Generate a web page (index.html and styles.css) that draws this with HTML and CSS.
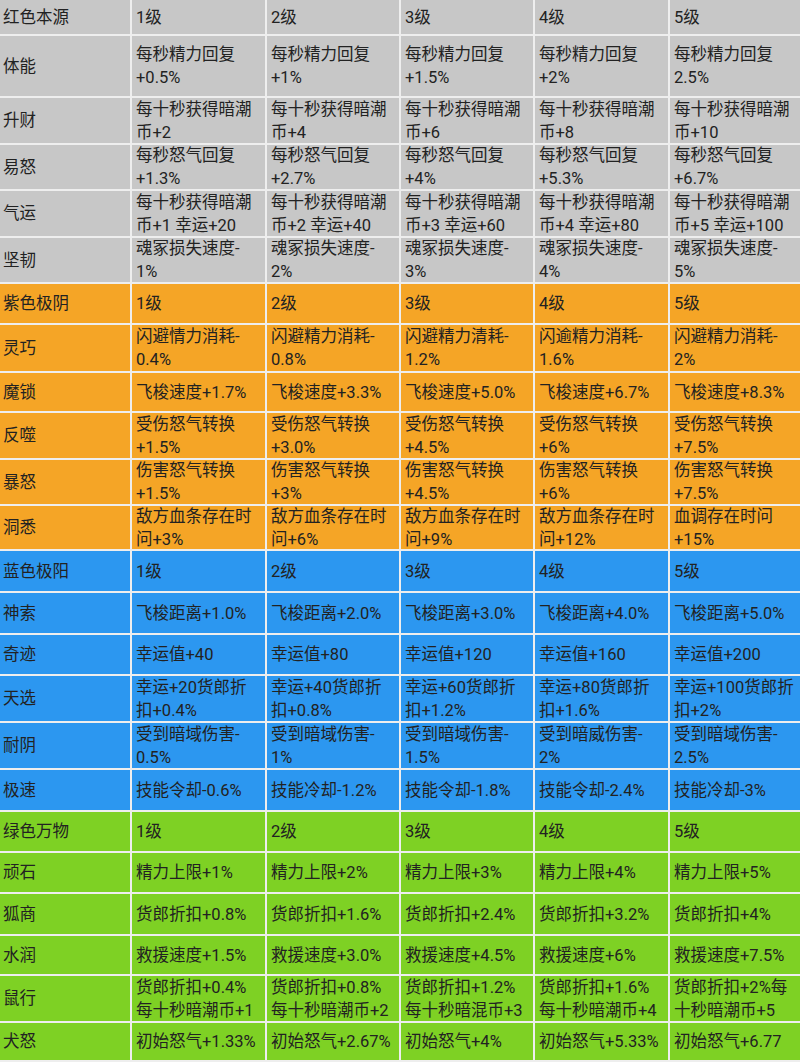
FILE: index.html
```html
<!DOCTYPE html>
<html lang="zh-CN">
<head>
<meta charset="utf-8">
<title>天赋表</title>
<link rel="stylesheet" href="styles.css">
</head>
<body>
<div class="sheet">
  <div class="row gray"><div>红色本源</div><div>1级</div><div>2级</div><div>3级</div><div>4级</div><div>5级</div></div>
  <div class="row gray"><div>体能</div><div>每秒精力回复<br>+0.5%</div><div>每秒精力回复<br>+1%</div><div>每秒精力回复<br>+1.5%</div><div>每秒精力回复<br>+2%</div><div>每秒精力回复<br>2.5%</div></div>
  <div class="row gray"><div>升财</div><div>每十秒获得暗潮<br>币+2</div><div>每十秒获得暗潮<br>币+4</div><div>每十秒获得暗潮<br>币+6</div><div>每十秒获得暗潮<br>币+8</div><div>每十秒获得暗潮<br>币+10</div></div>
  <div class="row gray"><div>易怒</div><div>每秒怒气回复<br>+1.3%</div><div>每秒怒气回复<br>+2.7%</div><div>每秒怒气回复<br>+4%</div><div>每秒怒气回复<br>+5.3%</div><div>每秒怒气回复<br>+6.7%</div></div>
  <div class="row gray"><div>气运</div><div>每十秒获得暗潮<br>币+1 幸运+20</div><div>每十秒获得暗潮<br>币+2 幸运+40</div><div>每十秒获得暗潮<br>币+3 幸运+60</div><div>每十秒获得暗潮<br>币+4 幸运+80</div><div>每十秒获得暗潮<br>币+5 幸运+100</div></div>
  <div class="row gray"><div>坚韧</div><div>魂冢损失速度-<br>1%</div><div>魂冢损失速度-<br>2%</div><div>魂冢损失速度-<br>3%</div><div>魂冢损失速度-<br>4%</div><div>魂冢损失速度-<br>5%</div></div>

  <div class="row orange"><div>紫色极阴</div><div>1级</div><div>2级</div><div>3级</div><div>4级</div><div>5级</div></div>
  <div class="row orange"><div>灵巧</div><div>闪避情力消耗-<br>0.4%</div><div>闪避精力消耗-<br>0.8%</div><div>闪避精力清耗-<br>1.2%</div><div>闪逾精力消耗-<br>1.6%</div><div>闪避精力消耗-<br>2%</div></div>
  <div class="row orange"><div>魔锁</div><div>飞梭速度+1.7%</div><div>飞梭速度+3.3%</div><div>飞梭速度+5.0%</div><div>飞梭速度+6.7%</div><div>飞梭速度+8.3%</div></div>
  <div class="row orange"><div>反噬</div><div>受伤怒气转换<br>+1.5%</div><div>受伤怒气转换<br>+3.0%</div><div>受伤怒气转换<br>+4.5%</div><div>受伤怒气转换<br>+6%</div><div>受伤怒气转换<br>+7.5%</div></div>
  <div class="row orange"><div>暴怒</div><div>伤害怒气转换<br>+1.5%</div><div>伤害怒气转换<br>+3%</div><div>伤害怒气转换<br>+4.5%</div><div>伤害怒气转换<br>+6%</div><div>伤害怒气转换<br>+7.5%</div></div>
  <div class="row orange"><div>洞悉</div><div>敌方血条存在时<br>问+3%</div><div>敌方血条存在时<br>问+6%</div><div>敌方血条存在时<br>问+9%</div><div>敌方血条存在时<br>问+12%</div><div>血调存在时问<br>+15%</div></div>

  <div class="row blue"><div>蓝色极阳</div><div>1级</div><div>2级</div><div>3级</div><div>4级</div><div>5级</div></div>
  <div class="row blue"><div>神索</div><div>飞梭距离+1.0%</div><div>飞梭距离+2.0%</div><div>飞梭距离+3.0%</div><div>飞梭距离+4.0%</div><div>飞梭距离+5.0%</div></div>
  <div class="row blue"><div>奇迹</div><div>幸运值+40</div><div>幸运值+80</div><div>幸运值+120</div><div>幸运值+160</div><div>幸运值+200</div></div>
  <div class="row blue"><div>天选</div><div>幸运+20货郎折<br>扣+0.4%</div><div>幸运+40货郎折<br>扣+0.8%</div><div>幸运+60货郎折<br>扣+1.2%</div><div>幸运+80货郎折<br>扣+1.6%</div><div>幸运+100货郎折<br>扣+2%</div></div>
  <div class="row blue"><div>耐阴</div><div>受到暗域伤害-<br>0.5%</div><div>受到暗域伤害-<br>1%</div><div>受到暗域伤害-<br>1.5%</div><div>受到暗威伤害-<br>2%</div><div>受到暗域伤害-<br>2.5%</div></div>
  <div class="row blue"><div>极速</div><div>技能令却-0.6%</div><div>技能冷却-1.2%</div><div>技能令却-1.8%</div><div>技能令却-2.4%</div><div>技能冷却-3%</div></div>

  <div class="row green"><div>绿色万物</div><div>1级</div><div>2级</div><div>3级</div><div>4级</div><div>5级</div></div>
  <div class="row green"><div>顽石</div><div>精力上限+1%</div><div>精力上限+2%</div><div>精力上限+3%</div><div>精力上限+4%</div><div>精力上限+5%</div></div>
  <div class="row green"><div>狐商</div><div>货郎折扣+0.8%</div><div>货郎折扣+1.6%</div><div>货郎折扣+2.4%</div><div>货郎折扣+3.2%</div><div>货郎折扣+4%</div></div>
  <div class="row green"><div>水润</div><div>救援速度+1.5%</div><div>救援速度+3.0%</div><div>救援速度+4.5%</div><div>救援速度+6%</div><div>救援速度+7.5%</div></div>
  <div class="row green"><div>鼠行</div><div>货郎折扣+0.4%<br>每十秒暗潮币+1</div><div>货郎折扣+0.8%<br>每十秒暗潮币+2</div><div>货郎折扣+1.2%<br>每十秒暗混币+3</div><div>货郎折扣+1.6%<br>每十秒暗潮币+4</div><div>货郎折扣+2%每<br>十秒暗潮币+5</div></div>
  <div class="row green"><div>犬怒</div><div>初始怒气+1.33%</div><div>初始怒气+2.67%</div><div>初始怒气+4%</div><div>初始怒气+5.33%</div><div>初始怒气+6.77</div></div>
</div>
</body>
</html>
```

FILE: styles.css
```css
html, body {
  margin: 0;
  padding: 0;
  background: #ffffff;
}

.sheet {
  display: grid;
  grid-template-columns: 130px 133px 132px 132px 133px 1fr;
  grid-template-rows: 34px 60px 45px 44px 45px 44px 39px 46px 38px 45px 44px 43px 40px 40px 39px 45px 45px 40px 39px 39px 40px 38px 45px 37px;
  gap: 2px;
  padding-bottom: 2px;
  background: #eeeeee;
  font-family: Roboto, "Noto Sans CJK SC", sans-serif;
  font-size: 16.5px;
  line-height: 23px;
  color: #222222;
}

.row {
  display: contents;
}

.row > div {
  display: flex;
  align-items: center;
  padding: 0 2px 0 4px;
  white-space: nowrap;
  overflow: hidden;
}

.row > div:first-child {
  padding-left: 3px;
}

.gray > div {
  background: #c7c7c7;
}

.orange > div {
  background: #f5a526;
}

.blue > div {
  background: #2c97f0;
}

.green > div {
  background: #7ed124;
}
```
